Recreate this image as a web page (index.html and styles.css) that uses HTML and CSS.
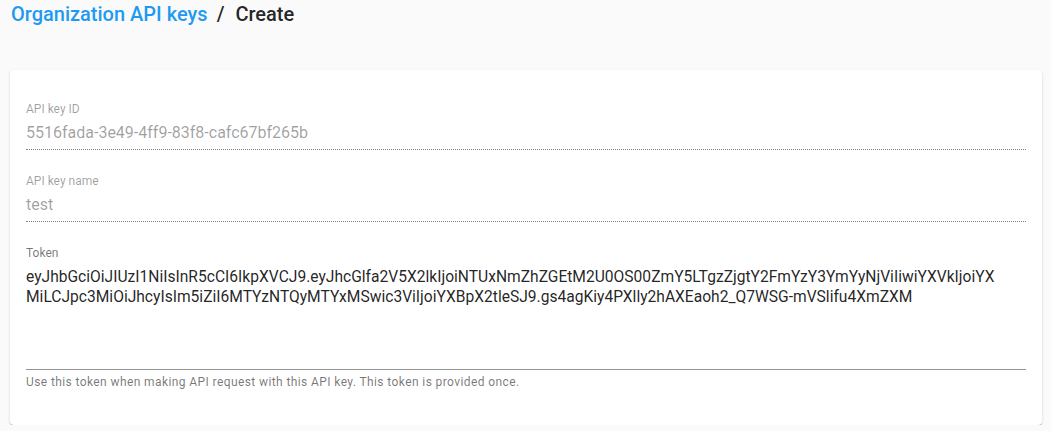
FILE: index.html
```html
<!DOCTYPE html>
<html lang="en">
<head>
    <meta charset="UTF-8">
    <meta name="viewport" content="width=device-width, initial-scale=1.0">
    <title>Create API key</title>
    <link rel="stylesheet" href="styles.css">
</head>
<body>
    <div class="page">
        <h1 class="crumbs">
            <a href="#" class="crumb-link">Organization API keys</a>
            <span class="crumb-sep">/</span>
            <span class="crumb-current">Create</span>
        </h1>

        <div class="card">
            <div class="field disabled">
                <label for="key-id">API key ID</label>
                <input type="text" id="key-id" value="5516fada-3e49-4ff9-83f8-cafc67bf265b" disabled>
            </div>

            <div class="field disabled">
                <label for="key-name">API key name</label>
                <input type="text" id="key-name" value="test" disabled>
            </div>

            <div class="field">
                <label for="token">Token</label>
                <textarea id="token" rows="5" readonly>eyJhbGciOiJIUzI1NiIsInR5cCI6IkpXVCJ9.eyJhcGlfa2V5X2lkIjoiNTUxNmZhZGEtM2U0OS00ZmY5LTgzZjgtY2FmYzY3YmYyNjViIiwiYXVkIjoiYX
MiLCJpc3MiOiJhcyIsIm5iZiI6MTYzNTQyMTYxMSwic3ViIjoiYXBpX2tleSJ9.gs4agKiy4PXlly2hAXEaoh2_Q7WSG-mVSlifu4XmZXM</textarea>
                <div class="hint">Use this token when making API request with this API key. This token is provided once.</div>
            </div>
        </div>
    </div>
</body>
</html>
```

FILE: styles.css
```css
body {
    margin: 0;
    padding: 0;
    background: #fafafa;
    font-family: Roboto, "Noto Sans", sans-serif;
    color: rgba(0, 0, 0, 0.87);
}

.page {
    padding: 0 9px 0 10px;
}

.crumbs {
    margin: 0;
    padding-left: 1px;
    font-size: 20px;
    line-height: 28px;
    font-weight: 500;
}

.crumb-link {
    color: #1e9af1;
    text-decoration: none;
}

.crumb-sep {
    margin: 0 6px 0 4px;
}

.crumb-current {
    color: rgba(0, 0, 0, 0.87);
}

.card {
    margin-top: 42px;
    background: white;
    border-radius: 4px;
    padding: 31px 16px 37px;
    box-shadow: 0 2px 1px -1px rgba(0,0,0,0.2), 0 1px 1px 0 rgba(0,0,0,0.14), 0 1px 3px 0 rgba(0,0,0,0.12);
}

.field + .field {
    margin-top: 23px;
}

.field label {
    display: block;
    font-size: 12px;
    line-height: 16px;
    color: rgba(0, 0, 0, 0.54);
}

.field.disabled label {
    color: rgba(0, 0, 0, 0.38);
}

.field input[type="text"] {
    display: block;
    width: 100%;
    box-sizing: border-box;
    margin: 0;
    padding: 6px 0 6px;
    border: none;
    border-bottom: 1px dotted rgba(0, 0, 0, 0.5);
    background: transparent;
    font-family: inherit;
    font-size: 16px;
    line-height: 20px;
    color: rgba(0, 0, 0, 0.38);
    outline: none;
}

.field textarea {
    display: block;
    width: 100%;
    box-sizing: border-box;
    height: 109px;
    margin: 0;
    padding: 6px 12px 0 0;
    border: none;
    border-bottom: 1px solid rgba(0, 0, 0, 0.42);
    background: transparent;
    font-family: inherit;
    font-size: 15.6px;
    line-height: 20px;
    color: rgba(0, 0, 0, 0.87);
    resize: none;
    overflow: hidden;
    outline: none;
}

.hint {
    margin-top: 6px;
    font-size: 12px;
    line-height: 12px;
    letter-spacing: 0.4px;
    color: rgba(0, 0, 0, 0.54);
}
```
